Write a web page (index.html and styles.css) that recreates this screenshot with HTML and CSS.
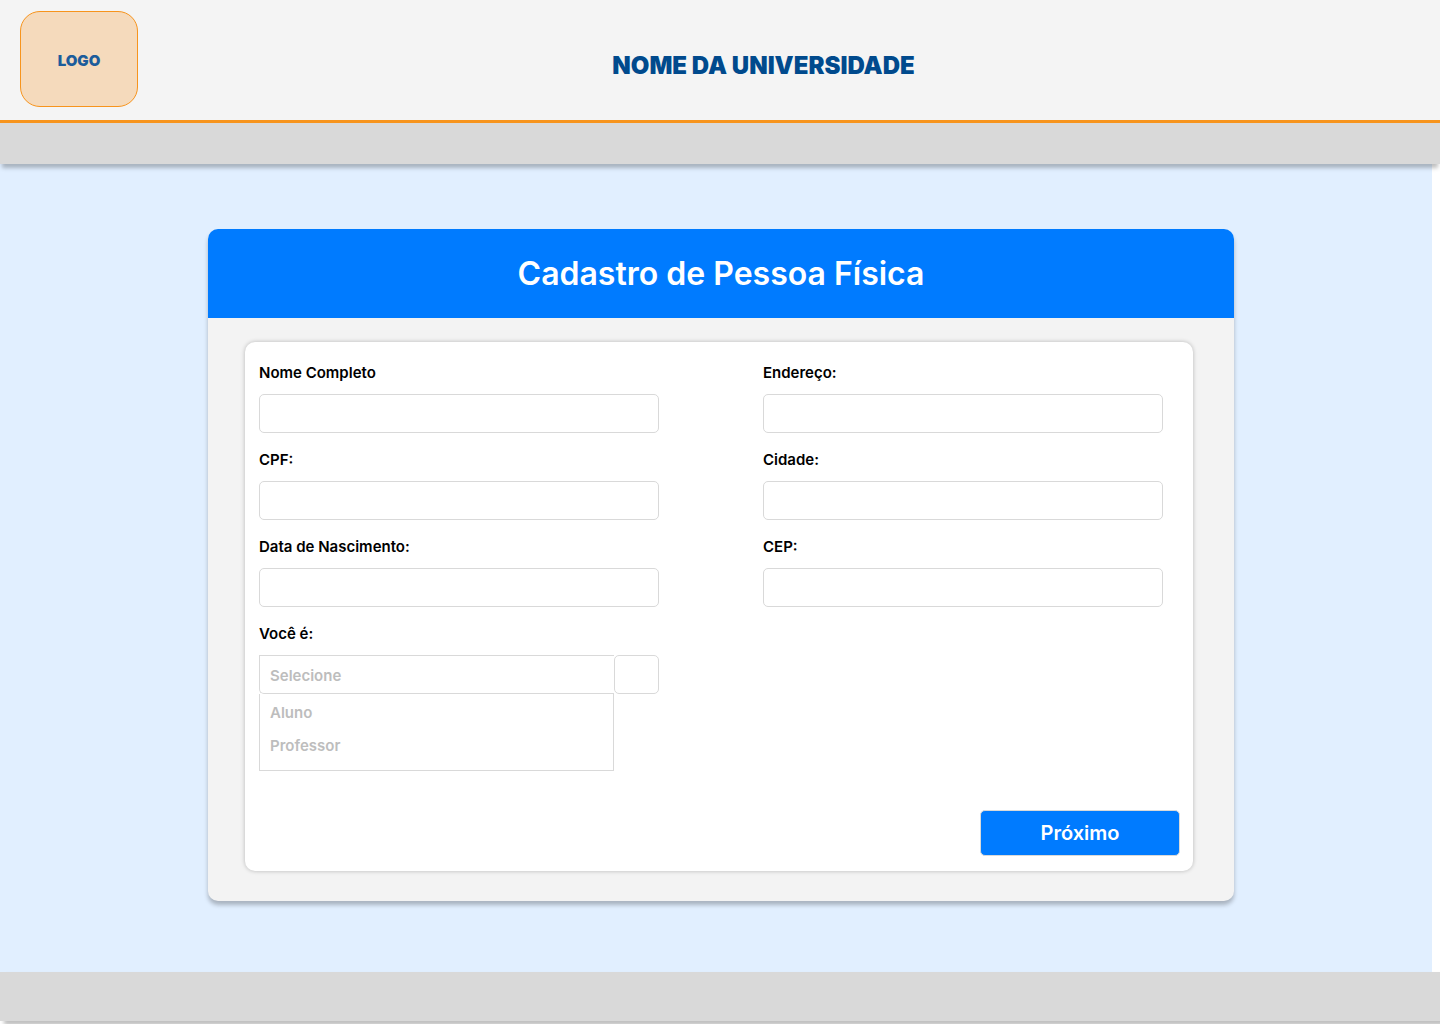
FILE: index.html
```html
<!DOCTYPE html>
<html lang="pt-BR">
<head>
  <meta charset="utf-8">
  <meta name="viewport" content="width=device-width, initial-scale=1">
  <title>Cadastro de Pessoa Física</title>
  <link rel="stylesheet" href="styles.css">
</head>
<body>
  <header class="site-header">
    <div class="logo">LOGO</div>
    <p class="site-name">NOME DA UNIVERSIDADE</p>
  </header>
  <div class="top-bar"></div>
  <main class="content">
    <section class="card">
      <h1 class="card-title">Cadastro de Pessoa Física</h1>
      <div class="card-body">
        <form class="panel">
          <div class="columns">
            <div class="column">
              <div class="field">
                <label for="nome">Nome Completo</label>
                <input class="control" id="nome" type="text">
              </div>
              <div class="field">
                <label for="cpf">CPF:</label>
                <input class="control" id="cpf" type="text">
              </div>
              <div class="field">
                <label for="nascimento">Data de Nascimento:</label>
                <input class="control" id="nascimento" type="text">
              </div>
              <div class="field">
                <label for="perfil">Você é:</label>
                <div class="picker">
                  <select class="control picker-select" id="perfil">
                    <option>Selecione</option>
                    <option>Aluno</option>
                    <option>Professor</option>
                  </select>
                  <button class="control picker-toggle" type="button" aria-label="Abrir opções"></button>
                  <ul class="picker-menu">
                    <li>Aluno</li>
                    <li>Professor</li>
                  </ul>
                </div>
              </div>
            </div>
            <div class="column">
              <div class="field">
                <label for="endereco">Endereço:</label>
                <input class="control" id="endereco" type="text">
              </div>
              <div class="field">
                <label for="cidade">Cidade:</label>
                <input class="control" id="cidade" type="text">
              </div>
              <div class="field">
                <label for="cep">CEP:</label>
                <input class="control" id="cep" type="text">
              </div>
            </div>
          </div>
          <button class="next" type="submit">Próximo</button>
        </form>
      </div>
    </section>
  </main>
  <footer class="site-footer"></footer>
</body>
</html>
```
FILE: styles.css
```css
* {
  box-sizing: border-box;
}

body {
  margin: 0;
  min-height: 100vh;
  display: flex;
  flex-direction: column;
  overflow-x: hidden;
  background: #fff;
  color: #000;
  font-family: Inter, "Liberation Sans", sans-serif;
}

.site-header {
  display: flex;
  align-items: center;
  padding: 11px 51px 13px 20px;
  border-bottom: 3px solid #f7941d;
  background: #f4f4f4;
}

.logo {
  display: flex;
  align-items: center;
  justify-content: center;
  width: 118px;
  height: 96px;
  padding-top: 2px;
  border: 1px solid #f7941d;
  border-radius: 20px;
  background: #f5dabc;
  color: #1c5c9b;
  font-size: 15px;
  font-weight: 900;
}

.site-name {
  flex: 1;
  margin: 0;
  padding-top: 14px;
  color: #004a8d;
  font-size: 24px;
  font-weight: 900;
  line-height: 30px;
  text-align: center;
}

.top-bar {
  position: relative;
  height: 41px;
  background: #d9d9d9;
  box-shadow: 0 6px 4px -2px rgba(0, 0, 0, 0.25);
}

.content {
  flex: 1;
  margin-right: 8px;
  padding: 65px 198px 71px 208px;
  background: #e1efff;
}

.card {
  border-radius: 10px;
  background: #f3f3f3;
  box-shadow: 0 4px 4px rgba(0, 0, 0, 0.25);
}

.card-title {
  margin: 0;
  padding: 25px 0 24px;
  border-radius: 10px 10px 0 0;
  background: #007bff;
  color: #fff;
  font-size: 32px;
  font-weight: 600;
  line-height: 40px;
  text-align: center;
}

.card-body {
  padding: 24px 41px 30px 37px;
}

.panel {
  display: flex;
  flex-direction: column;
  padding: 22px 13px 15px 14px;
  border-radius: 10px;
  background: #fff;
  box-shadow: 0 0 4px rgba(0, 0, 0, 0.25);
}

.columns {
  display: grid;
  grid-template-columns: 1fr 1fr;
  gap: 104px;
  padding-right: 17px;
}

.column {
  display: flex;
  flex-direction: column;
  gap: 18px;
}

.field {
  display: flex;
  flex-direction: column;
  gap: 12px;
  font-size: 15px;
  font-weight: 600;
  line-height: 18px;
}

.control {
  width: 100%;
  height: 39px;
  padding: 0 10px;
  border: 1px solid #d9d9d9;
  border-radius: 5px;
  background: #fff;
  font: inherit;
}

.picker {
  display: grid;
  grid-template-columns: 1fr 45px;
}

.picker-select {
  appearance: none;
  padding-top: 2px;
  border-right: 0;
  border-radius: 0 0 0 5px;
  color: #bdbdbd;
}

.picker-menu {
  margin: 0;
  padding: 10px;
  display: flex;
  flex-direction: column;
  gap: 15px;
  height: 77px;
  border: 1px solid #d9d9d9;
  border-top: 0;
  color: #bdbdbd;
  list-style: none;
}

.next {
  align-self: flex-end;
  width: 200px;
  height: 46px;
  margin-top: 39px;
  border: 1px solid #d9d9d9;
  border-radius: 5px;
  background: #007bff;
  color: #fff;
  font: inherit;
  font-size: 20px;
  font-weight: 600;
}

.site-footer {
  height: 49px;
  margin-bottom: 3px;
  background: #d9d9d9;
  box-shadow: 4px 4px 4px rgba(0, 0, 0, 0.25);
}
```
